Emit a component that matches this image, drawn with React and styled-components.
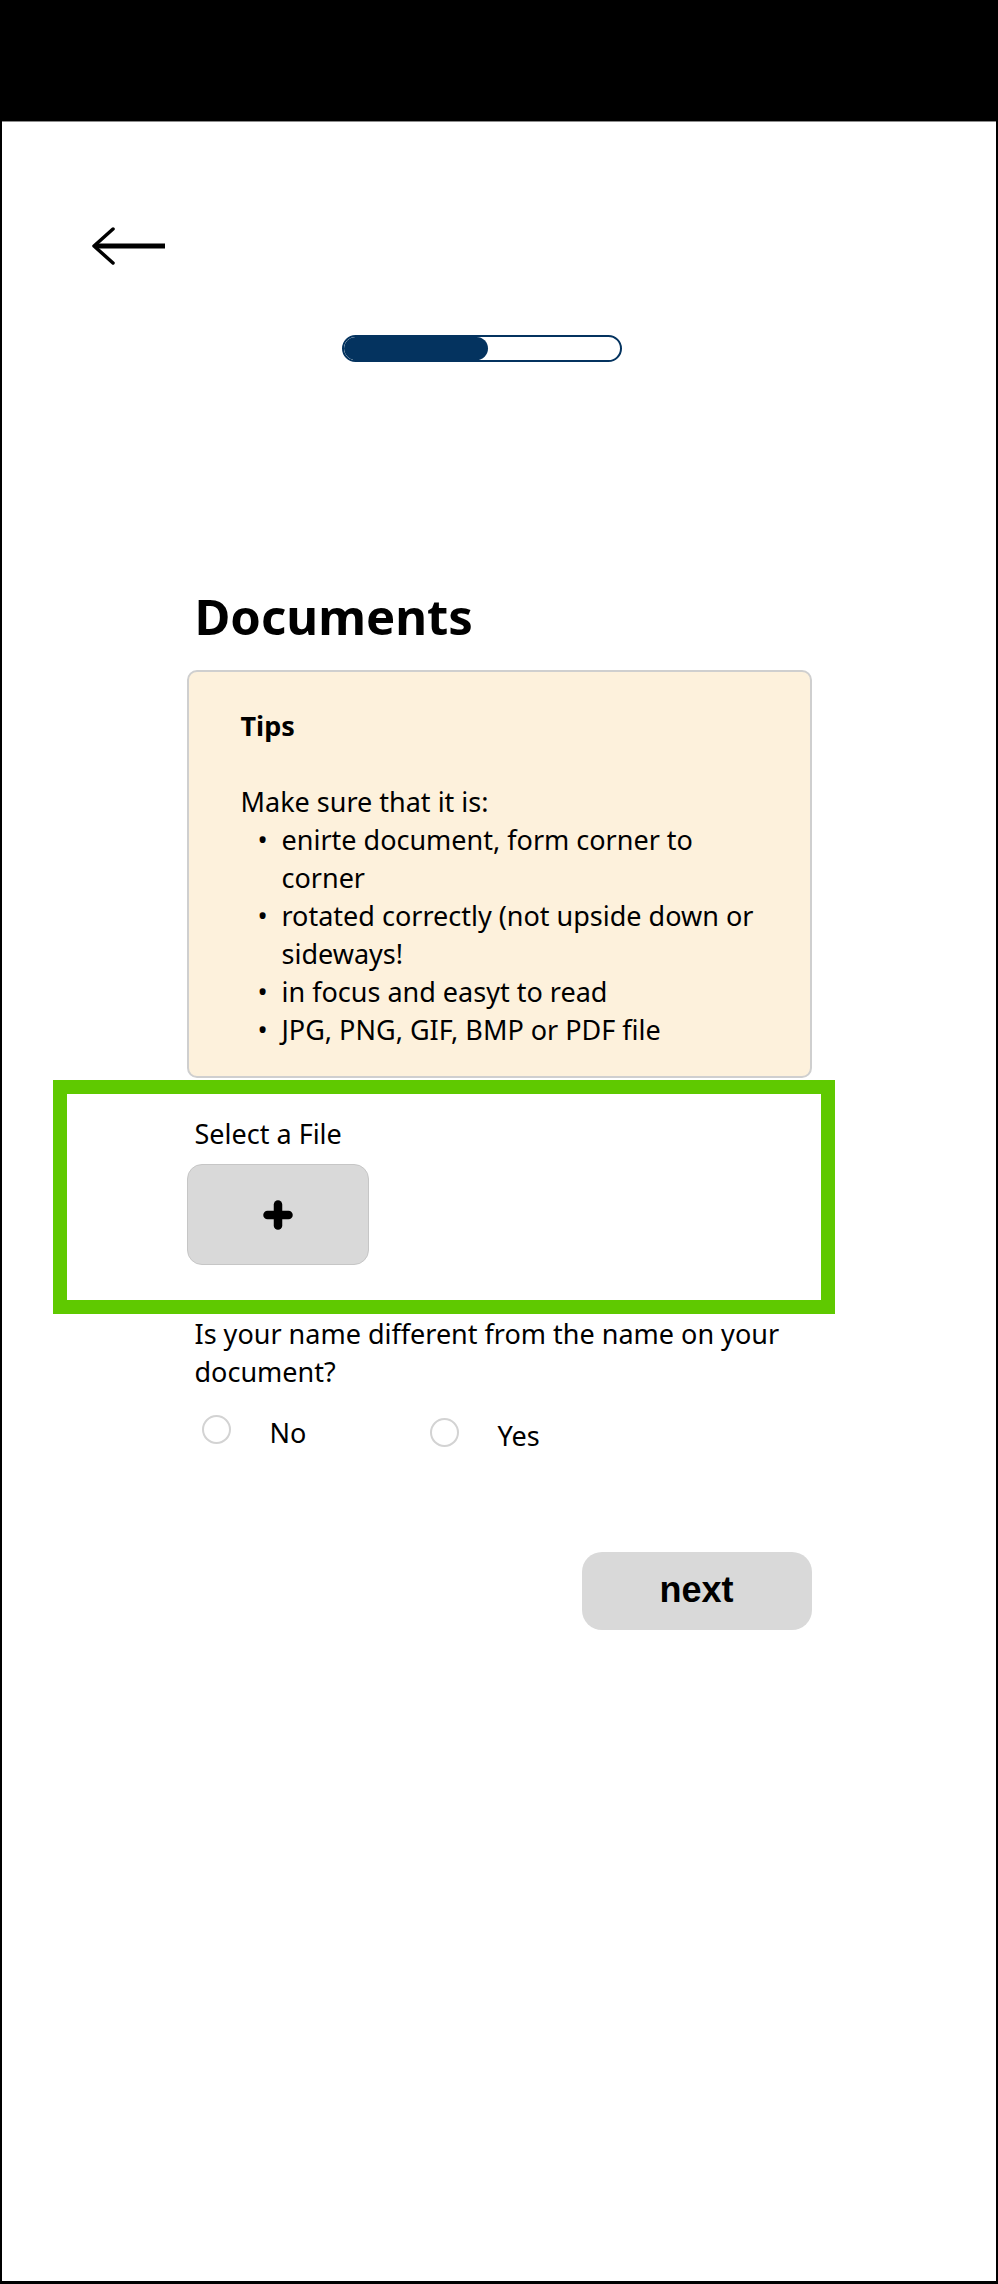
import React from 'react';
import styled, { createGlobalStyle } from 'styled-components';

const GlobalStyle = createGlobalStyle`
    html, body {
        margin: 0;
        padding: 0;
        background: #000;
    }
    body {
        font-family: "Noto Sans", "Open Sans", sans-serif;
        color: #000;
    }
    * { box-sizing: border-box; }
`;

const tips = [
    'enirte document, form corner to corner',
    'rotated correctly (not upside down or sideways!',
    'in focus and easyt to read',
    'JPG, PNG, GIF, BMP or PDF file',
];

const App = () => {
    return (
        <>
            <GlobalStyle />
            <Screen>
                <TopBar />
                <Panel>
                    <BackButton aria-label="back">
                        <svg width="78" height="40" viewBox="0 0 78 40" fill="none" stroke="#000" strokeLinecap="round" strokeLinejoin="round">
                            <path d="M24 3 L5 20 L24 37" strokeWidth="3.5" />
                            <path d="M6 20 H76" strokeWidth="5" strokeLinecap="butt" />
                        </svg>
                    </BackButton>

                    <ProgressTrack>
                        <ProgressFill style={{ width: '52%' }} />
                    </ProgressTrack>

                    <Column>
                        <Title>Documents</Title>

                        <TipsBox>
                            <TipsHeading>Tips</TipsHeading>
                            <Spacer />
                            <p>Make sure that it is:</p>
                            <TipsList>
                                {tips.map((t) => (
                                    <li key={t}>{t}</li>
                                ))}
                            </TipsList>
                        </TipsBox>

                        <Highlight>
                            <Label>Select a File</Label>
                            <FileButton aria-label="add file">
                                <svg width="30" height="30" viewBox="0 0 30 30" stroke="#000" strokeWidth="8.5" strokeLinecap="round">
                                    <path d="M15 4.5 V25.5" />
                                    <path d="M4.5 15 H25.5" />
                                </svg>
                            </FileButton>
                        </Highlight>

                        <Question>Is your name different from the name on your document?</Question>

                        <RadioRow>
                            <RadioOption>
                                <RadioCircle />
                                <span>No</span>
                            </RadioOption>
                            <RadioOption $shift={3}>
                                <RadioCircle />
                                <span>Yes</span>
                            </RadioOption>
                        </RadioRow>

                        <NextButton>next</NextButton>
                    </Column>
                </Panel>
            </Screen>
        </>
    );
};

export default App;

const Screen = styled.div`
    width: 998px;
    height: 2284px;
    background: #000;
    display: flex;
    flex-direction: column;
`;

const TopBar = styled.div`
    height: 121px;
    flex-shrink: 0;
`;

const Panel = styled.main`
    flex: 1;
    margin: 0 2px 3px;
    background: #fff;
    border-top: 1px solid #8c8c8c;
    display: flex;
    flex-direction: column;
`;

const BackButton = styled.div`
    margin: 104px 0 0 87px;
    width: 78px;
    height: 40px;
    svg { display: block; }
`;

const ProgressTrack = styled.div`
    margin: 69px 0 0 340px;
    width: 280px;
    height: 27px;
    border: 2px solid #04335f;
    border-radius: 14px;
    overflow: hidden;
    background: #fff;
`;

const ProgressFill = styled.div`
    height: 100%;
    background: #04335f;
    border-radius: 12px;
`;

// main content
const Column = styled.section`
    width: 625px;
    margin: 0 auto;
    display: flex;
    flex-direction: column;
    font-size: 27px;
    line-height: 38px;

    p { margin: 0; }
`;

const Title = styled.h1`
    margin: 225px 0 0;
    padding-left: 8px;
    font-size: 49px;
    line-height: 59px;
    font-weight: 700;
`;

const TipsBox = styled.div`
    margin-top: 24px;
    background: #fdf1dc;
    border: 2px solid #cfcfcf;
    border-radius: 10px;
    padding: 35px 41px 27px 52px;
`;

const TipsHeading = styled.p`
    font-weight: 700;
`;

const Spacer = styled.div`
    height: 38px;
`;

const TipsList = styled.ul`
    margin: 0;
    padding: 0;
    list-style: none;

    li {
        display: grid;
        grid-template-columns: 41px 1fr;
    }

    li::before {
        content: "•";
        padding-left: 17px;
    }
`;

const Highlight = styled.div`
    margin: 2px 0 0 -134px;
    width: 782px;
    border: 14px solid #5fc900;
    padding: 21px 0 35px 120px;
`;

const Label = styled.p`
    padding-left: 8px;
`;

const FileButton = styled.div`
    margin-top: 11px;
    width: 182px;
    height: 101px;
    background: #d9d9d9;
    border: 1.5px solid #c6c6c6;
    border-radius: 15px;
    display: flex;
    align-items: center;
    justify-content: center;
`;

const Question = styled.p`
    margin-top: 1px !important;
    padding-left: 8px;
`;

const RadioRow = styled.div`
    margin-top: 23px;
    padding-left: 15px;
    display: flex;
`;

const RadioOption = styled.label`
    width: 228px;
    display: flex;
    align-items: flex-start;
    gap: 39px;
    margin-top: ${({ $shift }) => ($shift || 0)}px;
`;

const RadioCircle = styled.span`
    margin-top: 1px;
    width: 29px;
    height: 29px;
    border: 2px solid #d3d3d3;
    border-radius: 50%;
    background: #fff;
`;

const NextButton = styled.div`
    margin-top: 97px;
    align-self: flex-end;
    width: 230px;
    height: 78px;
    border-radius: 20px;
    background: #d9d9d9;
    display: flex;
    align-items: center;
    justify-content: center;
    font-family: "Liberation Sans", Arial, sans-serif;
    font-weight: 700;
    font-size: 36px;
    line-height: 1;
    padding-bottom: 2px;
`;
